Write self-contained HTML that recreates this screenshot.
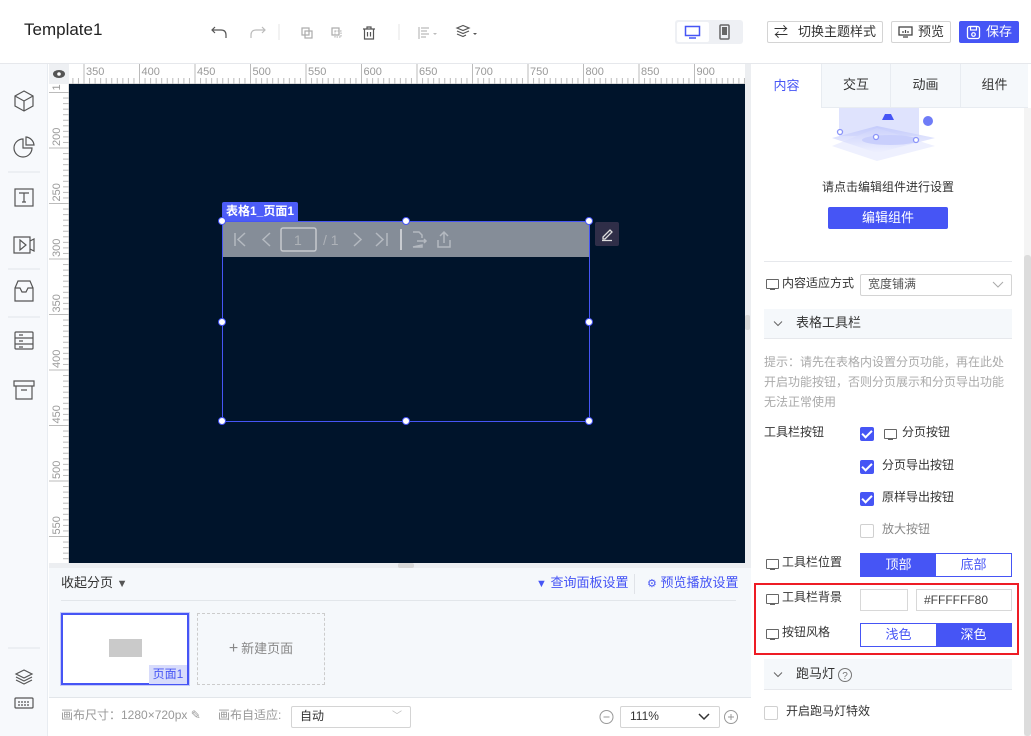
<!DOCTYPE html>
<html><head><meta charset="utf-8">
<style>
*{box-sizing:border-box;margin:0;padding:0}
body{width:1031px;height:736px;position:relative;overflow:hidden;background:#fff;font-family:"Liberation Sans","Noto Sans CJK SC",sans-serif;font-size:13px;color:#333;line-height:1.15}
.a{position:absolute}
.ic{stroke:#555;fill:none;stroke-width:1.2}
.btn{position:absolute;border:1px solid #d4d4d4;border-radius:2px;background:#fff;font-size:13px;display:flex;align-items:center;justify-content:center;color:#333}
.tab{position:absolute;top:64px;height:44px;display:flex;align-items:center;justify-content:center;font-size:13px;background:#f5f8fb;border-left:1px solid #e8ecf1;border-bottom:1px solid #e8ecf1}
.cb{position:absolute;width:14px;height:14px;border-radius:2px;background:#4655f5}
.cb:after{content:"";position:absolute;left:4px;top:1px;width:4px;height:8px;border:solid #fff;border-width:0 2px 2px 0;transform:rotate(45deg)}
.cbo{position:absolute;width:14px;height:14px;border-radius:2px;border:1px solid #d0d0d0;background:#fff}
.mon{position:absolute;width:13px;height:10px;border:1.2px solid #666;border-radius:1px}
.mon:after{content:"";position:absolute;left:3px;top:9px;width:5px;height:1.2px;background:#666}
.hnd{position:absolute;width:8px;height:8px;border-radius:50%;background:#fff;border:1.5px solid #4655f5}
</style></head><body>
<div class="a" style="left:24px;top:20px;font-size:17px;color:#222">Template1</div>
<svg class="a" style="left:210px;top:22px" width="280" height="20">
<path class="ic" d="M5 5 L2 8 L5 11 M2 8 H11 Q16 8 16 13 V16"/>
<path class="ic" style="stroke:#bbb" d="M52 5 L55 8 L52 11 M55 8 H46 Q41 8 41 13 V16"/>
<line x1="69" y1="2" x2="69" y2="18" stroke="#e5e5e5"/>
<rect x="92" y="6" width="7" height="7" class="ic" style="stroke:#aaa"/><rect x="95" y="9" width="7" height="7" class="ic" style="stroke:#aaa"/>
<rect x="122" y="6" width="7" height="7" class="ic" style="stroke:#aaa"/><rect x="125" y="9" width="6" height="6" class="ic" style="stroke:#bbb;stroke-dasharray:1.5 1"/>
<path class="ic" d="M153 7 H165 M157 7 V5 H161 V7 M154.5 7 V17 H163.5 V7 M157.5 10 V14.5 M160.5 10 V14.5"/>
<line x1="189" y1="2" x2="189" y2="18" stroke="#e5e5e5"/>
<path class="ic" style="stroke:#bbb" d="M209 5 V17 M211 6 H219 M211 9 H217 M211 12 H219 M211 15 H216"/>
<path d="M223 11 L227 11 L225 13Z" fill="#bbb"/>
<path class="ic" d="M247 6 L253 3.5 L259 6 L253 8.5Z M247 9 L253 11.5 L259 9 M247 12 L253 14.5 L256 13"/>
<path d="M263 11 L267 11 L265 13Z" fill="#555"/>
</svg>
<div class="a" style="left:675px;top:20px;width:68px;height:24px;background:#eef0f4;border-radius:3px"></div>
<div class="a" style="left:677px;top:22px;width:32px;height:20px;background:#fff;border-radius:2px"></div>
<svg class="a" style="left:684px;top:24px" width="56" height="16"><rect x="1.5" y="2.5" width="14" height="9" fill="none" stroke="#4655f5" stroke-width="1.5"/><line x1="5" y1="14" x2="12" y2="14" stroke="#4655f5" stroke-width="1.5"/>
<rect x="36" y="1" width="9" height="14" rx="1" fill="none" stroke="#666" stroke-width="1.5"/><rect x="38" y="3" width="5" height="8" fill="#666"/></svg>
<div class="btn" style="left:767px;top:21px;width:116px;height:22px"><span style="margin-right:10px;font-size:14px">⇄</span>切换主题样式</div>
<div class="btn" style="left:891px;top:21px;width:60px;height:22px"><svg width="16" height="14" style="margin-right:4px"><rect x="1" y="2" width="13" height="8" fill="none" stroke="#444" stroke-width="1.3"/><path d="M5 12 H10 M5 8 V6 M7.5 8 V5 M10 8 V6" stroke="#444" stroke-width="1.2"/></svg>预览</div>
<div class="btn" style="left:959px;top:21px;width:60px;height:22px;background:#4655f5;border-color:#4655f5;color:#fff"><svg width="16" height="15" style="margin-right:4px"><rect x="1.5" y="1.5" width="12" height="12" rx="2" fill="none" stroke="#fff" stroke-width="1.3"/><rect x="4.5" y="1.5" width="6" height="3.5" fill="none" stroke="#fff" stroke-width="1.2"/><circle cx="7.5" cy="9.5" r="1.8" fill="none" stroke="#fff" stroke-width="1.2"/></svg>保存</div>
<div class="a" style="left:0;top:63px;width:1031px;height:1px;background:#e6e8ec"></div>
<div class="a" style="left:0;top:64px;width:48px;height:672px;background:#f7f9fc;border-right:1px solid #e8ecf1"></div>
<svg class="a" style="left:0;top:64px" width="48" height="660">
<g fill="none" stroke="#555" stroke-width="1.2">
<path d="M24 27 L33 32 V42 L24 47 L15 42 V32Z M15 32 L24 37 L33 32 M24 37 V47"/>
<path d="M23 75 A9 9 0 1 0 32 84 H23Z M26 73 A9 9 0 0 1 34 81 H26Z"/>
<rect x="15" y="125" width="18" height="17"/><path d="M19 129 H29 M24 129 V138 M22 138 H26"/>
<path d="M14 173 H30 V189 H14Z M30 177 L34 175 V187 L30 185 M20 176 L26 181 L20 186Z"/>
<path d="M15 224 L18 217 H30 L33 224 V237 H15Z M15 224 H20 L22 228 H26 L28 224 H33"/>
<rect x="15" y="268" width="18" height="17" rx="1"/><path d="M15 274 H33 M15 280 H33 M19 271 H23 M19 277 H23 M19 283 H23"/>
<path d="M14 317 H34 V322 H14Z M16 322 V335 H32 V322 M21 326 H27"/>
<path d="M24 606 L32 610 L24 614 L16 610Z M16 613 L24 617 L32 613 M16 616 L24 620 L32 616"/>
<rect x="15" y="634" width="18" height="10" rx="1"/><path d="M18 638 H30 M18 641 H30" stroke-dasharray="2 1"/>
</g>
<g stroke="#e2e5ea"><line x1="8" y1="108" x2="40" y2="108"/><line x1="8" y1="205" x2="40" y2="205"/><line x1="8" y1="253" x2="40" y2="253"/><line x1="8" y1="584" x2="40" y2="584"/></g>
</svg>
<div class="a" style="left:49px;top:64px;width:696px;height:20px;background:#fff;border-bottom:1px solid #ddd"></div>
<div class="a" style="left:49px;top:84px;width:20px;height:480px;background:#fff;border-right:1px solid #ddd"></div>
<svg id="rul" class="a" style="left:49px;top:64px" width="696" height="500" font-family="Liberation Sans" font-size="11" fill="#999"></svg>
<div class="a" style="left:49px;top:64px;width:20px;height:20px;background:#eef0f3"></div>
<svg class="a" style="left:52px;top:67px" width="14" height="14"><ellipse cx="7" cy="7" rx="6" ry="4" fill="#555"/><circle cx="7" cy="7" r="1.8" fill="#fff"/></svg>
<div class="a" style="left:69px;top:84px;width:676px;height:479px;background:#00142b"></div>
<div class="a" style="left:745px;top:64px;width:6px;height:504px;background:#eceef1"></div>
<div class="a" style="left:745px;top:315px;width:5px;height:15px;background:#d8d8d8;border-radius:2px"></div>
<div class="a" style="left:49px;top:563px;width:696px;height:5px;background:#eceef1"></div>
<div class="a" style="left:398px;top:563px;width:16px;height:5px;background:#d8d8d8;border-radius:2px"></div>
<div class="a" style="left:222px;top:202px;width:76px;height:19px;background:#4c5cf8;color:#fff;font-size:12px;font-weight:bold;display:flex;align-items:center;justify-content:center;border-radius:2px 2px 0 0">表格1_页面1</div>
<div class="a" style="left:222px;top:221px;width:368px;height:201px;border:1px solid #4655f5"></div>
<div class="a" style="left:223px;top:222px;width:366px;height:35px;background:#858d98"></div>
<svg class="a" style="left:223px;top:222px" width="240" height="35" fill="none" stroke="#b4b9c0" stroke-width="1.5">
<path d="M12 11 V24 M22 11 L15 17.5 L22 24 M47 11 L40 17.5 L47 24"/>
<rect x="58" y="6" width="35" height="23" rx="2" stroke="#c6c9ce"/>
<path d="M131 11 L138 17.5 L131 24 M153 11 L160 17.5 L153 24 M164 11 V24"/>
<path d="M178 7 V28" stroke="#c9ccd1" stroke-width="2"/>
<path d="M190 10 H196 L199 13 V16 M199 23 V25 H190 Z M194 19 H203 M201 17 L203 19 L201 21"/>
<path d="M215 18 V25 H227 V18 M221 10 V21 M217 14 L221 10 L225 14"/>
</svg>
<div class="a" style="left:294px;top:232px;color:#aeb2b8;font-size:14px">1</div>
<div class="a" style="left:323px;top:232px;color:#aeb2b8;font-size:14px">/ 1</div>
<div class="hnd" style="left:218px;top:217px"></div><div class="hnd" style="left:402px;top:217px"></div><div class="hnd" style="left:585px;top:217px"></div>
<div class="hnd" style="left:218px;top:318px"></div><div class="hnd" style="left:585px;top:318px"></div>
<div class="hnd" style="left:218px;top:417px"></div><div class="hnd" style="left:402px;top:417px"></div><div class="hnd" style="left:585px;top:417px"></div>
<div class="a" style="left:595px;top:222px;width:24px;height:24px;background:#2f2e48;border-radius:2px"></div>
<svg class="a" style="left:599px;top:226px" width="16" height="16" fill="none" stroke="#ddd" stroke-width="1.3"><path d="M4 11 L11 4 L13 6 L6 13 H4Z M3 14.5 H13"/></svg>
<div class="a" style="left:49px;top:568px;width:702px;height:129px;background:#f5f8fb"></div>
<div class="a" style="left:61px;top:576px;font-size:13px;color:#333">收起分页 <span style="font-size:11px;color:#555">▼</span></div>
<div class="a" style="left:536px;top:576px;color:#4655f5;font-size:13px"><span style="font-size:11px">▼</span> 查询面板设置</div>
<div class="a" style="left:634px;top:574px;width:1px;height:20px;background:#e0e3e8"></div>
<div class="a" style="left:647px;top:576px;color:#4655f5;font-size:13px"><span style="font-size:11px">⚙</span> 预览播放设置</div>
<div class="a" style="left:61px;top:600px;width:675px;height:1px;background:#e2e6ea"></div>
<div class="a" style="left:60px;top:612px;width:130px;height:74px;border:1px solid #c6cbf8"></div>
<div class="a" style="left:61px;top:613px;width:128px;height:72px;border:2px solid #4655f5;background:#fff"></div>
<div class="a" style="left:109px;top:639px;width:33px;height:18px;background:#cacaca"></div>
<div class="a" style="left:149px;top:665px;width:38px;height:19px;background:#d8dcfb;color:#4655f5;font-size:12px;display:flex;align-items:center;justify-content:center">页面1</div>
<div class="a" style="left:197px;top:613px;width:128px;height:72px;border:1px dashed #ccc;color:#888;display:flex;align-items:center;justify-content:center;font-size:13px"><span style="font-size:16px;margin-right:3px">+</span>新建页面</div>
<div class="a" style="left:49px;top:697px;width:702px;height:1px;background:#e2e6ea"></div>
<div class="a" style="left:61px;top:709px;color:#999;font-size:12px">画布尺寸：1280×720px ✎</div>
<div class="a" style="left:218px;top:709px;color:#999;font-size:12px">画布自适应:</div>
<div class="btn" style="left:291px;top:706px;width:120px;height:22px;justify-content:space-between;padding:0 8px;font-size:12px"><span>自动</span><span style="color:#bbb;font-size:10px">﹀</span></div>
<svg class="a" style="left:598px;top:708px" width="144" height="18" fill="none" stroke="#999"><circle cx="8.5" cy="9" r="6.5"/><path d="M5.5 9 H11.5"/><circle cx="133" cy="9" r="6.5"/><path d="M130 9 H136 M133 6 V12"/></svg>
<div class="btn" style="left:620px;top:706px;width:100px;height:22px;justify-content:space-between;padding:0 8px 0 9px;font-size:12px"><span>111%</span><svg width="14" height="10"><path d="M2 2 L7 7 L12 2" fill="none" stroke="#333" stroke-width="1.5"/></svg></div>
<div class="a" style="left:751px;top:64px;width:280px;height:672px;background:#fff"></div>
<div class="tab" style="left:752px;width:69px;background:#fff;border-bottom:none;border-left:none;color:#4655f5">内容</div>
<div class="tab" style="left:821px;width:69px">交互</div>
<div class="tab" style="left:890px;width:70px">动画</div>
<div class="tab" style="left:960px;width:68px">组件</div>
<svg class="a" style="left:830px;top:108px" width="120" height="56">
<defs><linearGradient id="g1" x1="0" y1="0" x2="0" y2="1"><stop offset="0" stop-color="#b9c1fb"/><stop offset="1" stop-color="#eef0fe"/></linearGradient></defs>
<rect x="9" y="0" width="80" height="28" fill="#dfe3fd"/>
<path d="M2 38 L47 20 L105 38 L47 53Z" fill="#eef0fe"/>
<path d="M2 30 L47 18 L105 30 L47 45Z" fill="url(#g1)" opacity=".7"/>
<ellipse cx="60" cy="32" rx="28" ry="5" fill="#c9cffc"/>
<path d="M55 6 L52 12 H64 L61 6Z M58 0 V6" fill="#4655f5"/>
<circle cx="98" cy="13" r="5" fill="#6f7cf7"/>
<g fill="#fff" stroke="#8b95f9" stroke-width="1.3"><circle cx="10" cy="24" r="2.5"/><circle cx="46" cy="29" r="2.5"/><circle cx="86" cy="32" r="2.5"/></g>
</svg>
<div class="a" style="left:751px;top:181px;width:274px;text-align:center;font-size:12px;color:#333">请点击编辑组件进行设置</div>
<div class="a" style="left:828px;top:207px;width:120px;height:22px;background:#4655f5;border-radius:2px;color:#fff;font-size:13px;display:flex;align-items:center;justify-content:center">编辑组件</div>
<div class="a" style="left:764px;top:261px;width:248px;height:1px;background:#e6e8ec"></div>
<div class="mon" style="left:766px;top:279px"></div>
<div class="a" style="left:782px;top:277px;font-size:12px">内容适应方式</div>
<div class="btn" style="left:860px;top:274px;width:152px;height:22px;justify-content:space-between;padding:0 7px;font-size:12px;color:#555"><span>宽度铺满</span><svg width="12" height="8"><path d="M1 1 L6 6 L11 1" fill="none" stroke="#aaa"/></svg></div>
<div class="a" style="left:764px;top:309px;width:248px;height:30px;background:#f5f8fb;border-bottom:1px solid #e6e8ec"></div>
<svg class="a" style="left:773px;top:320px" width="10" height="8"><path d="M1 1.5 L5 5.5 L9 1.5" fill="none" stroke="#666"/></svg>
<div class="a" style="left:796px;top:316px;font-size:13px">表格工具栏</div>
<div class="a" style="left:764px;top:352px;width:248px;font-size:12px;line-height:20px;color:#aaa">提示：请先在表格内设置分页功能，再在此处开启功能按钮，否则分页展示和分页导出功能无法正常使用</div>
<div class="a" style="left:764px;top:426px;font-size:12px">工具栏按钮</div>
<div class="cb" style="left:860px;top:427px"></div><div class="mon" style="left:884px;top:429px"></div><div class="a" style="left:902px;top:426px;font-size:12px">分页按钮</div>
<div class="cb" style="left:860px;top:460px"></div><div class="a" style="left:882px;top:459px;font-size:12px">分页导出按钮</div>
<div class="cb" style="left:860px;top:492px"></div><div class="a" style="left:882px;top:491px;font-size:12px">原样导出按钮</div>
<div class="cbo" style="left:860px;top:524px"></div><div class="a" style="left:882px;top:523px;font-size:12px;color:#888">放大按钮</div>
<div class="mon" style="left:766px;top:559px"></div><div class="a" style="left:782px;top:556px;font-size:12px">工具栏位置</div>
<div class="a" style="left:860px;top:553px;width:152px;height:24px;border:1px solid #4655f5;display:flex;font-size:13px"><div style="flex:1;background:#4655f5;color:#fff;display:flex;align-items:center;justify-content:center">顶部</div><div style="flex:1;color:#4655f5;display:flex;align-items:center;justify-content:center">底部</div></div>
<div class="a" style="left:754px;top:583px;width:265px;height:72px;border:2px solid #ee1c25"></div>
<div class="mon" style="left:766px;top:594px"></div><div class="a" style="left:782px;top:591px;font-size:12px">工具栏背景</div>
<div class="a" style="left:860px;top:589px;width:48px;height:22px;border:1px solid #d8d8d8"></div>
<div class="a" style="left:916px;top:589px;width:96px;height:22px;border:1px solid #d8d8d8;font-size:12px;padding:4px 0 0 7px;color:#444">#FFFFFF80</div>
<div class="mon" style="left:766px;top:629px"></div><div class="a" style="left:782px;top:626px;font-size:12px">按钮风格</div>
<div class="a" style="left:860px;top:623px;width:152px;height:24px;border:1px solid #4655f5;display:flex;font-size:13px"><div style="flex:1;color:#4655f5;display:flex;align-items:center;justify-content:center">浅色</div><div style="flex:1;background:#4655f5;color:#fff;display:flex;align-items:center;justify-content:center">深色</div></div>
<div class="a" style="left:764px;top:659px;width:248px;height:31px;background:#f5f8fb;border-bottom:1px solid #e6e8ec"></div>
<svg class="a" style="left:773px;top:671px" width="10" height="8"><path d="M1 1.5 L5 5.5 L9 1.5" fill="none" stroke="#666"/></svg>
<div class="a" style="left:796px;top:667px;font-size:13px">跑马灯</div>
<svg class="a" style="left:837px;top:667px" width="16" height="16"><circle cx="8" cy="8" r="6.5" fill="none" stroke="#777"/><text x="8" y="12" font-size="10" text-anchor="middle" fill="#777" font-family="Liberation Sans">?</text></svg>
<div class="cbo" style="left:764px;top:706px"></div><div class="a" style="left:786px;top:705px;font-size:12px">开启跑马灯特效</div>
<div class="a" style="left:1024px;top:108px;width:7px;height:628px;background:#f4f4f4"></div>
<div class="a" style="left:1024px;top:255px;width:7px;height:481px;background:#dcdcdc;border-radius:3px"></div>
<script>
var s='',o='';
for(var v=300;v<=950;v+=5){var x=35+(v-350)*1.11;if(x<21||x>696)continue;var maj=v%50==0;
s+='<line x1="'+x+'" y1="'+(maj?0:14)+'" x2="'+x+'" y2="20" stroke="#bbb"/>';
if(maj)o+='<text x="'+(x+2)+'" y="11">'+v+'</text>';}
for(var v=150;v<=600;v+=5){var y=84+(v-200)*1.11;if(y<21||y>499)continue;var maj=v%50==0;
s+='<line y1="'+y+'" x1="'+(maj?0:14)+'" y2="'+y+'" x2="20" stroke="#bbb"/>';
if(maj)o+='<text transform="translate(11,'+(y-2)+') rotate(-90)">'+v+'</text>';}
document.getElementById('rul').innerHTML=s+o;
</script>
</body></html>
